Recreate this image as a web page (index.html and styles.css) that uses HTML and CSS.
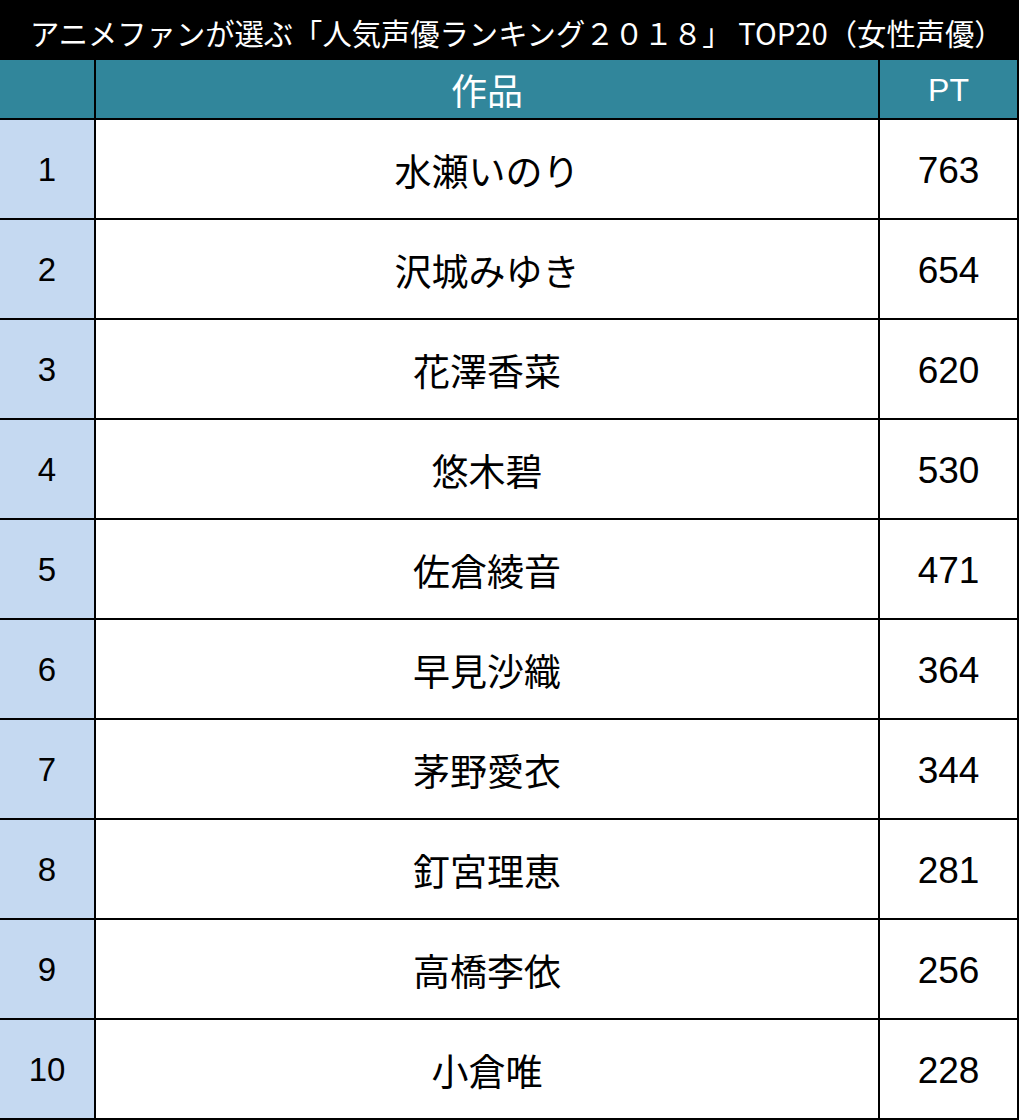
FILE: index.html
```html
<!DOCTYPE html>
<html lang="ja">
<head>
<meta charset="utf-8">
<title>人気声優ランキング2018</title>
<link rel="stylesheet" href="styles.css">
</head>
<body>
<div class="title">アニメファンが選ぶ「人気声優ランキング２０１８」 TOP20（女性声優）</div>
<div class="table">
  <div class="cell head rank"></div>
  <div class="cell head name">作品</div>
  <div class="cell head pt">PT</div>

  <div class="cell rank">1</div><div class="cell name">水瀬いのり</div><div class="cell pt">763</div>
  <div class="cell rank">2</div><div class="cell name">沢城みゆき</div><div class="cell pt">654</div>
  <div class="cell rank">3</div><div class="cell name">花澤香菜</div><div class="cell pt">620</div>
  <div class="cell rank">4</div><div class="cell name">悠木碧</div><div class="cell pt">530</div>
  <div class="cell rank">5</div><div class="cell name">佐倉綾音</div><div class="cell pt">471</div>
  <div class="cell rank">6</div><div class="cell name">早見沙織</div><div class="cell pt">364</div>
  <div class="cell rank">7</div><div class="cell name">茅野愛衣</div><div class="cell pt">344</div>
  <div class="cell rank">8</div><div class="cell name">釘宮理恵</div><div class="cell pt">281</div>
  <div class="cell rank">9</div><div class="cell name">高橋李依</div><div class="cell pt">256</div>
  <div class="cell rank">10</div><div class="cell name">小倉唯</div><div class="cell pt">228</div>
</div>
</body>
</html>
```

FILE: styles.css
```css
html, body {
  margin: 0;
  padding: 0;
  background: #ffffff;
}

body {
  width: 1019px;
  height: 1120px;
  overflow: hidden;
  font-family: "Noto Sans CJK JP", "Noto Sans", sans-serif;
}

.title {
  height: 60px;
  background: #000000;
  color: #ffffff;
  font-size: 29.3px;
  line-height: 64px;
  padding-left: 30px;
  white-space: nowrap;
}

.table {
  display: grid;
  grid-template-columns: 96px 784px 139px;
  grid-template-rows: 60px repeat(10, 100px);
}

.cell {
  box-sizing: border-box;
  border-right: 2px solid #000000;
  border-bottom: 2px solid #000000;
  display: flex;
  align-items: center;
  justify-content: center;
  color: #000000;
}

.head {
  background: #31869b;
  color: #ffffff;
}

.rank {
  background: #c5d9f1;
  font-family: "Liberation Sans", Arial, sans-serif;
  font-size: 33px;
  padding-top: 2px;
}

.head.rank {
  background: #31869b;
}

.name {
  font-size: 37px;
  padding-top: 2px;
}

.head.name {
  font-size: 36px;
  padding-top: 0;
}

.pt {
  font-family: "Liberation Sans", Arial, sans-serif;
  font-size: 37px;
  padding-top: 4px;
}

.head.pt {
  font-size: 32px;
  padding-top: 2px;
}
```
